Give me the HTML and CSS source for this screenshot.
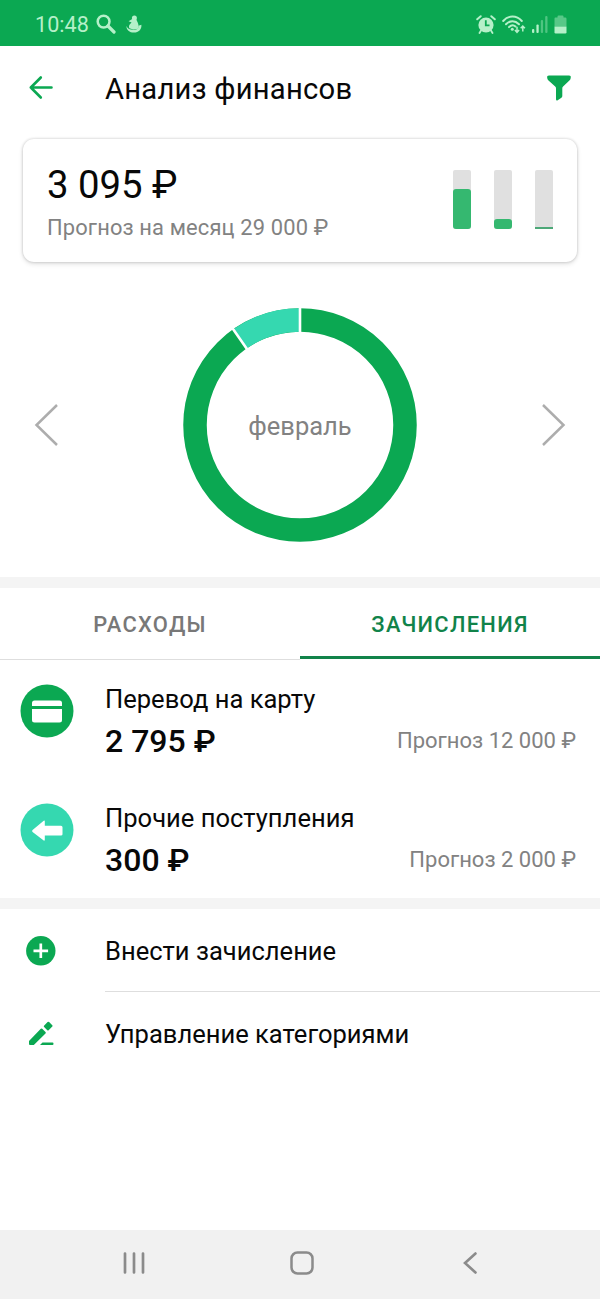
FILE: index.html
```html
<!DOCTYPE html>
<html lang="ru">
<head>
<meta charset="utf-8">
<meta name="viewport" content="width=device-width, initial-scale=1">
<title>Анализ финансов</title>
<link rel="stylesheet" href="styles.css">
</head>
<body>
<div class="screen">
  <div class="status">
    <span class="clock">10:48</span>
    <svg class="status-search" width="20" height="20" viewBox="0 0 20 20"><circle cx="7.6" cy="7.6" r="5.9" fill="none" stroke="currentColor" stroke-width="2.5"/><path d="M12 12l6 6" stroke="currentColor" stroke-width="3.2" stroke-linecap="round"/></svg>
    <svg class="status-app" width="16" height="18" viewBox="0 0 16 18" fill="currentColor"><circle cx="8.4" cy="3" r="2.5"/><path d="M6.2 4L2.600 6.200 5.600 7.600C4 9.200 2.300 10.500 3.300 13.200L7.400 14.600 12 13.700C13.400 11.500 12.300 8.300 10.300 4.400Z"/><path d="M0.500 11C1.500 14 4.600 14.900 8 14.700C11.300 14.500 12.700 13.300 12.400 10.700L15.400 9.800C15.800 14.500 12.600 17.600 8 17.600C3.400 17.600 .3 15 .5 11Z"/></svg>
    <div class="status-icons">
      <svg width="20" height="19" viewBox="0 0 20 19"><circle cx="10" cy="10" r="7.600" fill="currentColor"/><path d="M1.200 4.300L4.700 1.200M18.800 4.300L15.300 1.200" stroke="currentColor" stroke-width="2" stroke-linecap="round"/><path d="M5 15.500L3.500 18M15 15.500L16.500 18" stroke="currentColor" stroke-width="1.800" stroke-linecap="round"/><path d="M9.800 5.200V10.400H13.500" fill="none" stroke="#0ba852" stroke-width="1.800"/></svg>
      <svg width="24" height="19" viewBox="0 0 24 19"><g fill="none" stroke="currentColor" stroke-width="2" stroke-linecap="round"><path d="M1.200 6C6.500.1 14.500.1 19.800 6M4 9.200C8 5.100 13 5.100 17 9.200M7 12.100C9.200 9.900 11.800 9.900 13.500 11.500"/></g><circle cx="10.300" cy="14.300" r="1.500" fill="currentColor"/><path d="M15 11.800V17.300M12.900 15L15 17.300 17.100 15M20.800 16.500V11M18.700 13.300L20.800 11 22.900 13.300" fill="none" stroke="currentColor" stroke-width="1.500"/></svg>
      <svg width="16" height="17" viewBox="0 0 16 17" fill="currentColor"><rect y="13" width="2.300" height="4" rx="1"/><rect x="4.400" y="8.500" width="2.300" height="8.500" rx="1"/><rect x="8.800" y="4" width="2.300" height="13" rx="1" opacity=".4"/><rect x="13.200" width="2.300" height="17" rx="1" opacity=".4"/></svg>
      <svg width="13" height="19" viewBox="0 0 13 19" fill="currentColor"><path d="M1.200 2.500H3.500V1.500Q3.500.5 4.500.5H8.500Q9.500.5 9.500 1.500V2.500H11.300Q12.500 2.500 12.500 3.700V11.500H.5V3.700Q.5 2.500 1.200 2.500Z" opacity=".45"/><path d="M.5 11.500H12.500V17.300Q12.500 18.500 11.300 18.500H1.700Q.5 18.500 .5 17.300Z"/></svg>
    </div>
  </div>

  <header class="header">
    <svg class="back" width="26" height="26" viewBox="0 0 26 26" fill="none" stroke="currentColor" stroke-width="2.600" stroke-linecap="round" stroke-linejoin="round"><path d="M23.500 12.500H2.800M12.800 2.500L2.800 12.500L12.800 22.500"/></svg>
    <h1 class="title">Анализ финансов</h1>
    <svg class="filter" width="26" height="26" viewBox="0 0 26 26" fill="currentColor"><path d="M3 .6H23Q25.200.6 24.700 3Q24.500 4.500 23.400 5.500L17.100 11.500Q16.300 12.300 16.300 13.400V21Q16.300 22 15.400 22.700L11.700 25.300Q10.100 26 10 24.300V13.400Q10 12.300 9.200 11.500L2.500 5.500Q1.500 4.500 1.200 3Q.8.6 3 .6Z"/></svg>
  </header>

  <section class="card">
    <div>
      <div class="total">3 095 ₽</div>
      <div class="forecast-total">Прогноз на месяц 29 000 ₽</div>
    </div>
    <div class="bars">
      <div class="bar"><div class="bar-fill" style="height:39.5px"></div></div>
      <div class="bar"><div class="bar-fill" style="height:9.5px"></div></div>
      <div class="bar"><div class="bar-fill bar-fill-min" style="height:2px"></div></div>
    </div>
  </section>

  <section class="chart">
    <svg width="25" height="42" viewBox="0 0 25 42" fill="none" stroke="#adadad" stroke-width="2.500"><path d="M23 1L2.500 21L23 41"/></svg>
    <div class="donut">
      <svg width="236" height="236" viewBox="-118 -118 236 236">
        <circle r="105" fill="none" stroke="#0ba852" stroke-width="23.500"/>
        <path d="M-60.100 -86.100A105 105 0 0 1 0 -105" fill="none" stroke="#35d8b0" stroke-width="23.500"/>
        <path d="M0 -90V-118M-51.500 -73.800L-67.500 -96.800" stroke="#fff" stroke-width="2.600"/>
      </svg>
      <span class="month">февраль</span>
    </div>
    <svg width="25" height="42" viewBox="0 0 25 42" fill="none" stroke="#adadad" stroke-width="2.500"><path d="M2 1L22.500 21L2 41"/></svg>
  </section>

  <div class="band"></div>

  <nav class="tabs">
    <div class="tab">РАСХОДЫ</div>
    <div class="tab tab-active">ЗАЧИСЛЕНИЯ</div>
  </nav>

  <section class="entries">
    <div class="entry">
      <svg class="entry-icon" width="54" height="54" viewBox="0 0 54 54"><circle cx="27" cy="27" r="26.500" fill="#0ba852"/><path d="M14.500 16.500H39.500Q42 16.500 42 19V22H12V19Q12 16.500 14.500 16.500ZM12 25H42V36Q42 38.500 39.500 38.500H14.500Q12 38.500 12 36Z" fill="#fff"/></svg>
      <div class="entry-body">
        <div class="entry-name">Перевод на карту</div>
        <div class="entry-line"><span class="amount">2 795 ₽</span><span class="forecast">Прогноз 12 000 ₽</span></div>
      </div>
    </div>
    <div class="entry">
      <svg class="entry-icon" width="54" height="54" viewBox="0 0 54 54"><circle cx="27" cy="27" r="26.500" fill="#35d8b0"/><path d="M12.600 27L23.700 17.800Q24.800 17 24.800 18.500V22.700H41Q42.500 22.700 42.500 24.200V31.200Q42.500 32.500 41 32.500H24.800V36.600Q24.800 38.300 23.700 37.500L12.600 29Q11.500 28 12.600 27Z" fill="#fff"/></svg>
      <div class="entry-body">
        <div class="entry-name">Прочие поступления</div>
        <div class="entry-line"><span class="amount">300 ₽</span><span class="forecast">Прогноз 2 000 ₽</span></div>
      </div>
    </div>
  </section>

  <div class="band"></div>

  <section class="actions">
    <div class="action">
      <svg class="action-icon" width="30" height="30" viewBox="0 0 30 30"><circle cx="14.800" cy="14.800" r="14.700" fill="#0ba852"/><path d="M14.800 7.500V22.100M7.500 14.800H22.100" stroke="#fff" stroke-width="2.700"/></svg>
      <div class="action-label action-ruled">Внести зачисление</div>
    </div>
    <div class="action">
      <svg class="action-icon" width="30" height="30" viewBox="0 0 30 30" fill="#0ba852"><path d="M3 22L14.800 9.800Q15.500 9.100 16.200 9.800L19.500 13.100Q20.200 13.800 19.500 14.500L7.800 26.100H4Q3 26.100 3 25.100ZM18 6.700L21.600 3.100Q22.400 2.400 23.100 3.100L26.300 6.200Q27 6.900 26.300 7.600L22.600 11.300Q21.900 11.800 21.300 11.200L18.100 8.100Q17.500 7.400 18 6.700ZM16.500 23.500H26.500Q27.500 23.500 27.500 24.800Q27.500 26.100 26.500 26.100H14Z"/></svg>
      <div class="action-label">Управление категориями</div>
    </div>
  </section>

  <footer class="navbar">
    <svg width="24" height="24" viewBox="0 0 24 24" stroke="currentColor" stroke-width="2.700" stroke-linecap="round"><path d="M3 2.500V21.500M12 2.500V21.500M21 2.500V21.500"/></svg>
    <svg width="24" height="24" viewBox="0 0 24 24" fill="none" stroke="currentColor" stroke-width="2.500"><rect x="1.500" y="1.500" width="21" height="21" rx="6"/></svg>
    <svg width="24" height="24" viewBox="0 0 24 24" fill="none" stroke="currentColor" stroke-width="2.600" stroke-linecap="round"><path d="M17.500 2.500L7 12L17.500 21.500"/></svg>
  </footer>
</div>
</body>
</html>
```
FILE: styles.css
```css
* { box-sizing: border-box; }

body {
  margin: 0;
  background: #fff;
  color: #080808;
  font-family: Roboto, "Noto Sans", sans-serif;
}

svg { display: block; flex: none; }

.screen {
  display: flex;
  flex-direction: column;
  width: 600px;
  height: 1299px;
  overflow: hidden;
}

.status {
  display: flex;
  align-items: center;
  height: 46px;
  padding: 2px 33px 0 35px;
  background: #0ba852;
  color: #b5f0c9;
}

.clock { width: 61px; padding-top: 2px; font-size: 21.6px; line-height: 26px; }
.status-app { margin-left: 10px; }
.status-icons { display: flex; align-items: center; gap: 6px; margin-left: auto; }

.header {
  display: flex;
  align-items: center;
  height: 84px;
  padding: 0 28px;
  color: #0ba852;
}

.title {
  flex: 1;
  margin: 2px 0 0 51px;
  color: #080808;
  font-size: 29.2px;
  font-weight: 400;
  letter-spacing: .24px;
  line-height: 36px;
}

.card {
  display: flex;
  justify-content: space-between;
  height: 123px;
  margin: 9px 23px 0;
  padding: 26px 24px 0;
  border-radius: 11px;
  box-shadow: 0 0 3px rgba(0, 0, 0, .2), 0 2px 5px rgba(0, 0, 0, .12);
}

.total { font-size: 38.300px; line-height: 40px; }
.forecast-total { margin-top: 11px; color: #828282; font-size: 21.9px; letter-spacing: .14px; line-height: 24px; }
.bars { display: flex; gap: 23px; padding-top: 5px; }

.bar {
  display: flex;
  align-items: flex-end;
  width: 18px;
  height: 58.5px;
  border-radius: 2px;
  background: #e0e0e0;
}

.bar-fill { width: 100%; border-radius: 3px; background: #35b870; }
.bar-fill-min { border-radius: 0; background: #4da878; }

.chart {
  display: flex;
  align-items: center;
  justify-content: space-between;
  height: 315px;
  padding: 11px 34px 0;
}

.donut { display: grid; place-items: center; }
.donut > * { grid-area: 1 / 1; }
.month { padding-top: 2px; color: #828282; font-size: 25.5px; line-height: 30px; }
.band { flex: none; height: 11px; background: #f4f4f4; }

.tabs { display: flex; height: 72px; }

.tab {
  flex: 1;
  border-bottom: 1.5px solid #dedede;
  color: #787878;
  font-size: 21.9px;
  font-weight: 500;
  letter-spacing: 1.3px;
  line-height: 74px;
  text-align: center;
}

.tab { height: 71.5px; }
.tab-active { height: 71px; border-bottom: 3px solid #11834a; color: #11834a; }

.entry { display: flex; height: 119px; padding: 23px 24px 0 19.5px; }
.entry-icon { margin-top: 1px; }
.entry-body { flex: 1; margin-left: 31.5px; }
.entry-name { font-size: 25.55px; line-height: 32px; }
.entry-line { display: flex; align-items: center; justify-content: space-between; margin-top: 6px; line-height: 40px; }
.amount { font-size: 32px; font-weight: 500; }
.forecast { color: #828282; font-size: 22px; }

.action { display: flex; align-items: center; height: 83px; padding-left: 26px; }
.action-label { flex: 1; height: 83px; margin-left: 49px; font-size: 25.55px; line-height: 84px; }
.action-ruled { border-bottom: 1.5px solid #dedede; }

.navbar {
  display: flex;
  flex: none;
  align-items: center;
  justify-content: space-between;
  height: 69px;
  margin-top: auto;
  padding: 0 118px 3px 122px;
  background: #f1f1f1;
  color: #8b8b8b;
}
```
